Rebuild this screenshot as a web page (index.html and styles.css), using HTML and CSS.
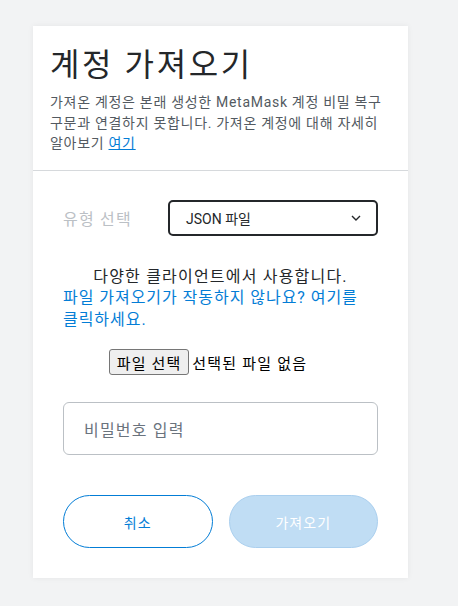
FILE: index.html
```html
<!DOCTYPE html>
<html lang="ko">
<head>
<meta charset="utf-8">
<link rel="stylesheet" href="styles.css">
</head>
<body>
<div class="card">
  <div class="header">
    <h1 class="title">계정 가져오기</h1>
    <p class="desc">가져온 계정은 본래 생성한 MetaMask 계정 비밀 복구 구문과 연결하지 못합니다. 가져온 계정에 대해 자세히 알아보기 <a class="link" href="#">여기</a></p>
  </div>
  <div class="body">
    <div class="type-row">
      <span class="type-label">유형 선택</span>
      <div class="select">
        <span>JSON 파일</span>
        <svg class="chev" width="12" height="8" viewBox="0 0 12 8"><path d="M2 2 L6 6 L10 2" fill="none" stroke="#24272a" stroke-width="1.4"/></svg>
      </div>
    </div>
    <div class="info">
      <div class="info-main">다양한 클라이언트에서 사용합니다.</div>
      <a class="info-link" href="#">파일 가져오기가 작동하지 않나요? 여기를 클릭하세요.</a>
    </div>
    <div class="file-row">
      <button class="file-btn" type="button">파일 선택</button>
      <span class="file-none">선택된 파일 없음</span>
    </div>
    <div class="pw">비밀번호 입력</div>
    <div class="actions">
      <button class="btn btn-cancel" type="button">취소</button>
      <button class="btn btn-import" type="button">가져오기</button>
    </div>
  </div>
</div>
</body>
</html>
```
FILE: styles.css
```css
html, body {
  margin: 0;
  padding: 0;
}
body {
  background: #f2f3f4;
  font-family: Roboto, "Noto Sans CJK KR", sans-serif;
  color: #24272a;
  width: 458px;
  height: 606px;
  overflow: hidden;
  letter-spacing: 0.075em;
  word-break: keep-all;
}
.card {
  margin: 26px 0 0 33px;
  width: 375px;
  height: 552px;
  background: #fff;
  box-shadow: 0 0 6px rgba(0, 0, 0, 0.06);
  display: flex;
  flex-direction: column;
}
.header {
  padding: 19px 17px 16px 17px;
  border-bottom: 1px solid #d6d9dc;
}
.title {
  margin: 0;
  font-size: 32px;
  line-height: 40px;
  font-weight: 400;
  letter-spacing: 2.6px;
  color: #24272a;
}
.desc {
  margin: 7px 0 0 0;
  font-size: 14px;
  line-height: 20.5px;
  letter-spacing: 0.7px;
  color: #535a61;
}
.link {
  color: #037dd6;
  text-decoration: underline;
}
.body {
  padding: 29px 30px 30px 30px;
  display: flex;
  flex-direction: column;
}
.type-row {
  display: flex;
  align-items: center;
  justify-content: space-between;
}
.type-label {
  font-size: 16px;
  color: #bbc0c5;
}
.select {
  box-sizing: border-box;
  width: 210px;
  height: 36px;
  border: 2px solid #24272a;
  border-radius: 5px;
  display: flex;
  align-items: center;
  justify-content: space-between;
  padding: 0 14px 0 16px;
  font-size: 14px;
  letter-spacing: 0;
  color: #24272a;
}
.chev {
  display: block;
}
.info {
  margin-top: 30px;
  font-size: 16px;
  line-height: 21.5px;
}
.info-main {
  text-align: center;
  color: #24272a;
}
.info-link {
  display: block;
  color: #037dd6;
  text-decoration: none;
  letter-spacing: 0.06em;
}
.file-row {
  margin-top: 19px;
  padding-right: 25px;
  display: flex;
  justify-content: center;
  align-items: center;
  gap: 3px;
  font-size: 15px;
}
.file-btn {
  font-family: inherit;
  font-size: 15px;
  letter-spacing: 0.075em;
  background: #efefef;
  border: 1px solid #767676;
  border-radius: 3px;
  padding: 0 7px;
  height: 26px;
  color: #000;
}
.file-none {
  color: #000;
}
.pw {
  margin-top: 27px;
  box-sizing: border-box;
  height: 53px;
  border: 1px solid #bbc0c5;
  border-radius: 6px;
  padding: 0 20px;
  display: flex;
  align-items: center;
  font-size: 16px;
  color: #6a737d;
}
.actions {
  margin-top: 40px;
  display: flex;
  gap: 16px;
}
.btn {
  box-sizing: border-box;
  flex: 1;
  height: 53px;
  border-radius: 27px;
  font-family: inherit;
  font-size: 14px;
  letter-spacing: 0.075em;
}
.btn-cancel {
  background: #fff;
  border: 1px solid #037dd6;
  color: #037dd6;
}
.btn-import {
  background: #c0ddf4;
  border: 1px solid #aacfee;
  color: #fff;
}
```
